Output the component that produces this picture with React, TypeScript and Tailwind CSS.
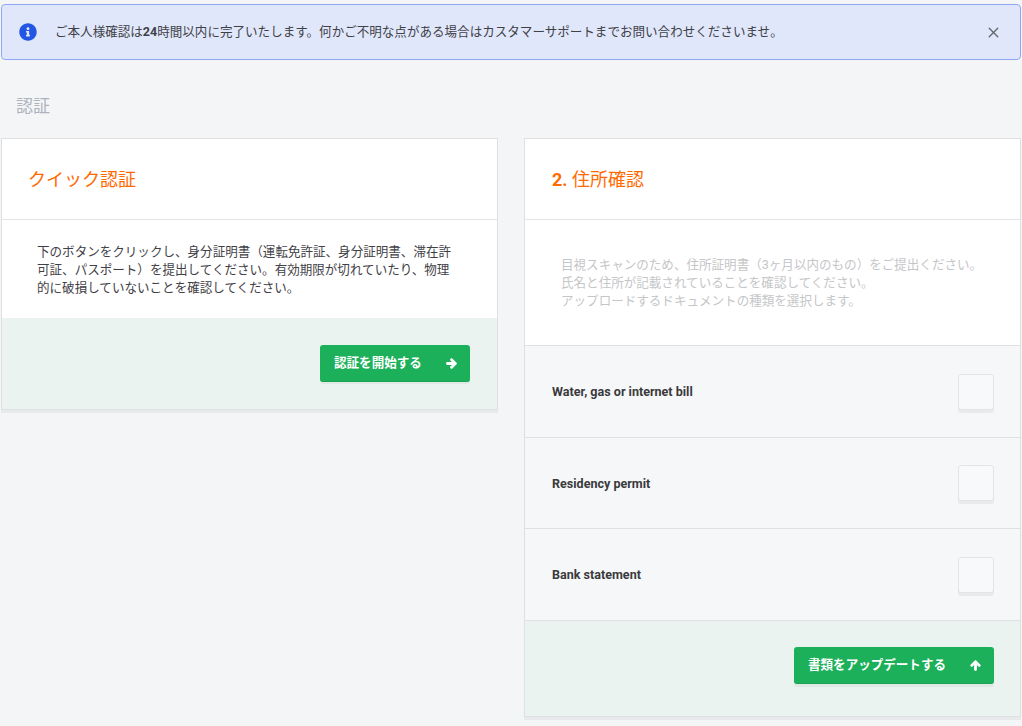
import { FaArrowRight, FaArrowUp, FaInfoCircle } from 'react-icons/fa';
import { X } from 'lucide-react';

const fontStack = "font-['Roboto','Noto_Sans_CJK_JP',sans-serif]";

const documentTypes = [
  { label: 'Water, gas or internet bill', height: 'h-[92px]' },
  { label: 'Residency permit', height: 'h-[91px]' },
  { label: 'Bank statement', height: 'h-[92px]' },
];

function DocumentRow({ label, height }: { label: string; height: string }) {
  return (
    <div className={`flex items-center justify-between border-b border-[#dfe0e2] bg-[#f6f7f9] pl-[27px] pr-[26px] ${height}`}>
      <span className="mt-[2px] text-[12.56px] font-bold text-[#3a3a3c]">{label}</span>
      <button
        type="button"
        className="h-[36px] w-[36px] rounded-[3px] border border-[#e3e4e6] bg-[#f8f9fb] shadow-[0_3px_0_#e9eaec]"
      />
    </div>
  );
}

export default function App() {
  return (
    <div className={`min-h-[726px] bg-[#f4f5f7] pt-[4px] pl-[1px] pr-[1px] ${fontStack}`}>
      <div className="flex h-[56px] items-center rounded-[4px] border border-[#8fa8f5] bg-[#e0e7fb] pl-[17px] pr-[18px]">
        <FaInfoCircle className="h-[18px] w-[18px] text-[#2456e6]" />
        <p className="ml-[18px] flex-1 text-[12.56px] text-[#3f4146]">
          ご本人様確認は<strong className="font-bold">24</strong>時間以内に完了いたします。何かご不明な点がある場合はカスタマーサポートまでお問い合わせくださいませ。
        </p>
        <X className="mt-[1px] h-[17px] w-[17px] text-[#5f6268]" strokeWidth={1.75} />
      </div>

      <h1 className="ml-[15px] mt-[34px] h-[44px] text-[17px] leading-[24px] text-[#adb3bd]">認証</h1>

      <div className="flex items-start gap-[26px]">
        <section className="w-[497px] border border-[#dfe0e2] bg-white shadow-[0_3px_0_#e8e9eb]">
          <div className="flex h-[81px] items-center border-b border-[#e3e4e6] pl-[26px]">
            <h2 className="mt-[1px] text-[18px] text-[#ff6a00]">クイック認証</h2>
          </div>
          <div className="h-[98px] pl-[35px] pr-[44px] pt-[23px] text-[12.56px] leading-[18px] text-[#3f4146]">
            下のボタンをクリックし、身分証明書（運転免許証、身分証明書、滞在許可証、パスポート）を提出してください。有効期限が切れていたり、物理的に破損していないことを確認してください。
          </div>
          <div className="flex h-[91px] items-start justify-end bg-[#ebf3f0] pr-[27px] pt-[27px]">
            <button
              type="button"
              className="flex h-[37px] w-[150px] items-center justify-between rounded-[3px] border-b border-[#1aa554] bg-[#1cb05a] pl-[14px] pr-[13px] text-[12.56px] font-bold text-white shadow-[0_2px_0_#dfe8e5]"
            >
              認証を開始する
              <FaArrowRight className="h-[11px] w-[11px]" stroke="currentColor" strokeWidth={50} />
            </button>
          </div>
        </section>

        <section className="w-[497px] border border-[#dfe0e2] bg-white shadow-[0_3px_0_#e8e9eb]">
          <div className="flex h-[81px] items-center border-b border-[#e3e4e6] pl-[27px]">
            <h2 className="text-[18px] text-[#ff6a00]">
              <strong className="font-bold">2.</strong> 住所確認
            </h2>
          </div>
          <div className="h-[126px] border-b border-[#dfe0e2] pl-[36px] pt-[36px] text-[12.56px] leading-[18px] text-[#c5c6c8]">
            <p>目視スキャンのため、住所証明書（3ヶ月以内のもの）をご提出ください。</p>
            <p>氏名と住所が記載されていることを確認してください。</p>
            <p>アップロードするドキュメントの種類を選択します。</p>
          </div>
          {documentTypes.map((doc) => (
            <DocumentRow key={doc.label} label={doc.label} height={doc.height} />
          ))}
          <div className="flex h-[95px] items-start justify-end bg-[#ebf3f0] pr-[26px] pt-[26px]">
            <button
              type="button"
              className="flex h-[37px] w-[200px] items-center justify-between rounded-[3px] border-b border-[#1aa554] bg-[#1cb05a] pl-[14px] pr-[13px] text-[12.56px] font-bold text-white shadow-[0_3px_0_#dfe8e5]"
            >
              書類をアップデートする
              <FaArrowUp className="h-[11px] w-[11px]" stroke="currentColor" strokeWidth={50} />
            </button>
          </div>
        </section>
      </div>
    </div>
  );
}
